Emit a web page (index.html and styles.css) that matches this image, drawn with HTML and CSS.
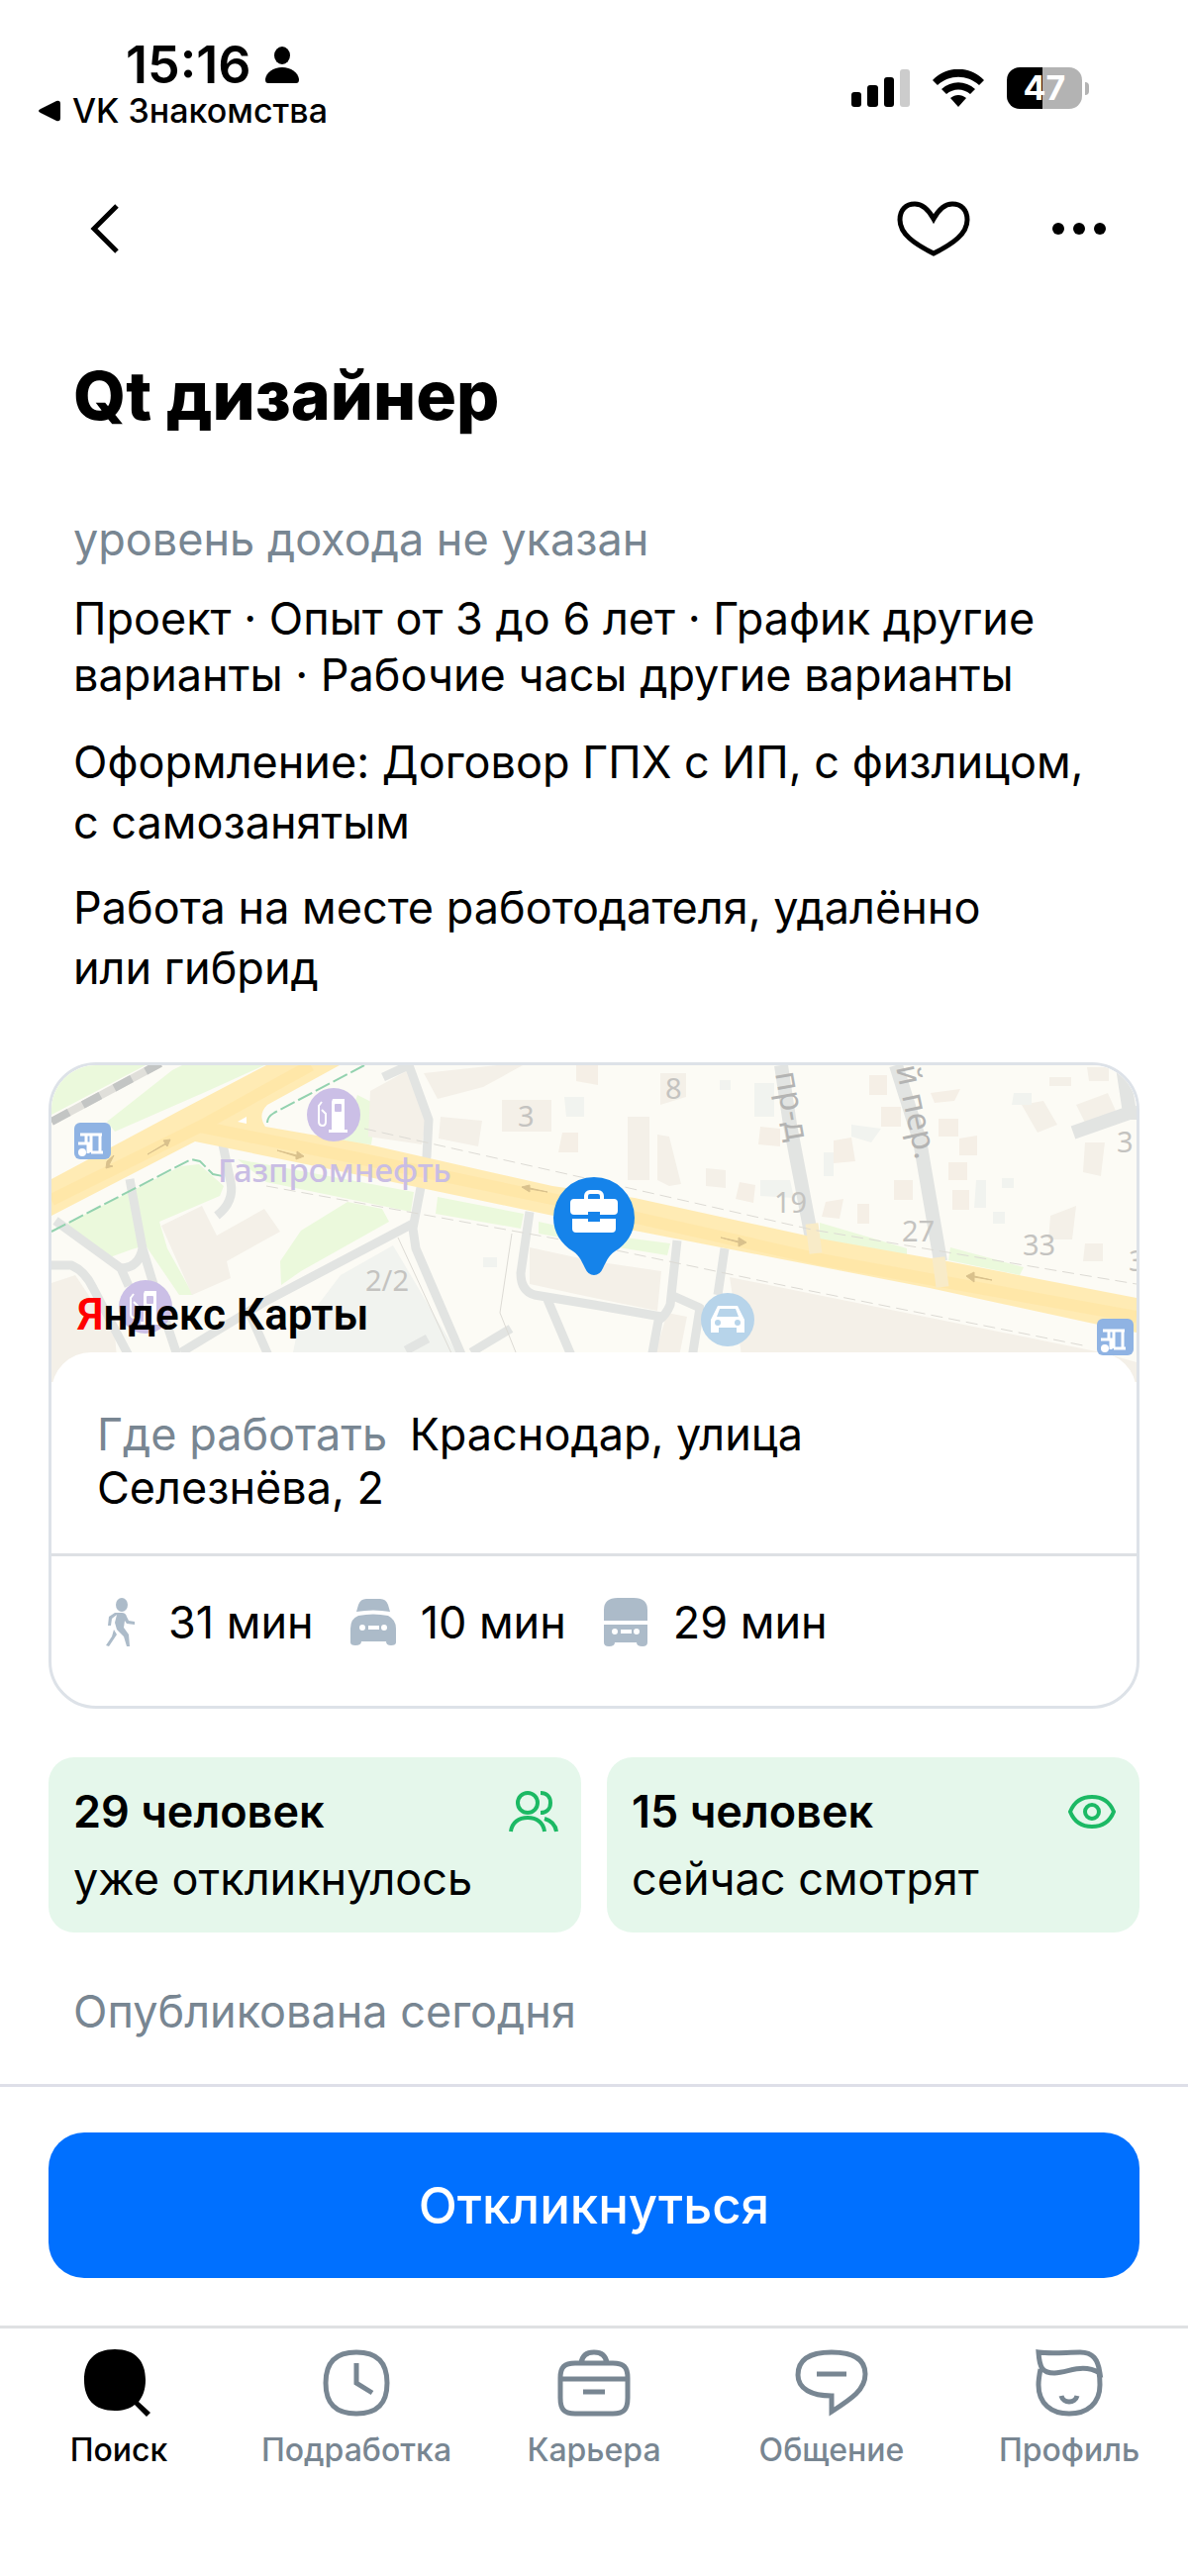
FILE: index.html
```html
<!DOCTYPE html>
<html lang="ru">
<head>
    <meta charset="UTF-8">
    <meta name="viewport" content="width=device-width, initial-scale=1.0">
    <title>Qt дизайнер</title>
    <link rel="stylesheet" href="styles.css">
</head>
<body>

    <!-- Status bar -->
    <div class="status">
        <div class="status-left">
            <div class="clock">
                <span>15:16</span>
                <svg width="34" height="38" viewBox="0 0 34 38"><ellipse cx="17" cy="9" rx="8" ry="9"/><path d="M0 33C1 26 8 21 17 21s16 5 17 12c0 3-1 4-3 4H3c-2 0-3-1-3-4z"/></svg>
            </div>
            <a class="return" href="#">
                <svg width="22" height="22" viewBox="0 0 22 22"><path d="M2 9L18 1q4-1 4 3v14q0 4-4 3L2 13q-4-2 0-4z"/></svg>
                VK Знакомства
            </a>
        </div>
        <div class="status-right">
            <svg width="59" height="38" viewBox="0 0 59 38">
                <rect y="23" width="10" height="15" rx="3"/>
                <rect x="16" y="16" width="11" height="22" rx="3"/>
                <rect x="33" y="8" width="10" height="30" rx="3"/>
                <rect x="49" width="10" height="38" rx="3" fill="#ccc"/>
            </svg>
            <svg width="52" height="38" viewBox="0 0 52 38">
                <path d="M0 11C14-4 38-4 52 11l-5 5C35 5 17 5 5 16z"/>
                <path d="M9 20c10-9 24-9 34 0l-5 5c-7-6-17-6-24 0z"/>
                <path d="M18 29c5-4 11-4 16 0l-8 9z"/>
            </svg>
            <div class="battery"><span>47</span></div>
        </div>
    </div>

    <!-- App bar -->
    <header class="appbar">
        <button class="icon-btn" aria-label="Назад">
            <svg width="30" height="50" viewBox="0 0 30 50" fill="none" stroke="#000" stroke-width="5"><path d="M28 2L5 25l23 23"/></svg>
        </button>
        <div class="appbar-actions">
            <button class="icon-btn" aria-label="В избранное">
                <svg width="74" height="56" viewBox="0 0 74 56" fill="none" stroke="#000" stroke-width="5"><path d="M37 18C32 9 26 3 18 3 9 3 3 9 3 19c0 14 14 24 34 34 20-10 34-20 34-34C71 9 65 3 56 3c-8 0-14 6-19 15z"/></svg>
            </button>
            <button class="icon-btn" aria-label="Ещё">
                <svg width="56" height="14" viewBox="0 0 56 14"><circle cx="7" cy="7" r="6"/><circle cx="28" cy="7" r="6"/><circle cx="49" cy="7" r="6"/></svg>
            </button>
        </div>
    </header>

    <main>
        <!-- Vacancy description -->
        <section class="vacancy">
            <h1>Qt дизайнер</h1>
            <p class="income">уровень дохода не указан</p>
            <p class="terms">Проект · Опыт от 3 до 6 лет · График другие<br>варианты · Рабочие часы другие варианты</p>
            <p>Оформление: Договор ГПХ с ИП, с физлицом,<br>с самозанятым</p>
            <p>Работа на месте работодателя, удалённо<br>или гибрид</p>
        </section>

        <!-- Address card -->
        <section class="place">
            <div class="map">
                <svg class="map-tiles" viewBox="0 0 1096 320" preserveAspectRatio="xMidYMin slice">
                    <rect width="1096" height="320" fill="#fcfbf5"/>
                    <!-- greenery -->
                    <g fill="#ebf9dc">
                        <path d="M0 0h95L0 50z"/>
                        <path d="M56 57L122 5l10-5h83l-55 25-96 42z"/>
                        <path d="M15 160l116-58 18-2 25 22-4 10-61 26 8 27 26 47h-14L95 182l-14 4-22 8z"/>
                        <path d="M231 198l21-31 47-29 35 7 7 13-89 50-20 14z"/>
                        <path d="M188 95l178 33-3 20-146-30zM390 133l87 17-3 15-86-15zM492 158l56 12 77 10-3 12-74-12-56-10z"/>
                        <path d="M776 159l88 26 0 11-88-20zM908 184l74 20-4 8-72-15z"/>
                    </g>
                    <path d="M309 30l20 10-6 40-30-2z" fill="#ebf9dc"/>
                    <!-- buildings -->
                    <g fill="#f4f0e8">
                        <path d="M111 162l41-20 15 30 48-27 16 23-54 30 4 17-39 17z"/>
                        <path d="M0 220l24-8 40 60 4 48H0z"/>
                        <path d="M322 26l40-22 18 44-6 32-54-8z"/>
                        <path d="M376 8l74-8h26l-40 22-46 12zM393 52l42 4-4 26-40-8zM455 35h50v32h-50z"/>
                        <path d="M483 184l65 14 68 10-4 40-64-13-65-14z"/>
                        <path d="M685 214l375 76 36 10v20H700l-4-34z"/>
                        <path d="M582 52h22v64h-22zM612 70l12 2 12 48-12 2-12-6zM615 8h26v24l-26 8zM661 104l20 2v18l-20-2z"/>
                        <path d="M622 250l20 4-8 40-24-4zM980 40l22-4 14 24-20 8zM1035 40l32-12 8 18-30 14zM1044 78h20l-4 34-18-4z"/>
                        <path d="M1009 152l26-10-4 34-24 0zM1044 180h18v18h-20zM1008 12h22v9h-22zM1046 2h22l0 14h-20z"/>
                    </g>
                    <g fill="#f5efe6">
                        <path d="M826 10h18v20h-18zM838 42h20v20h-20zM790 76l18-3 4 24-22 2zM716 62l20 2v18l-22-2zM851 116h19v20h-19zM896 54h20v18h-20zM917 74l18-3v20h-18zM906 98h19v18h-19zM910 126h17v20h-17zM695 118l16 3-2 18-18-4zM782 138l18-3-4 20-18-2zM814 140h12v20h-12zM888 28l30-4-6 12-20 2zM530 0h22v20l-22-4zM516 68h16v20h-20z"/>
                    </g>
                    <g fill="#f1f3ef">
                        <path d="M292 212l53-30 64 108v30H238l10-50z"/>
                        <path d="M716 116h30l4 18-34-2zM808 60l30 4-10 14-20-6zM934 116h10v28h-12zM972 28h18v12h-20zM960 114h12v10h-12zM780 88h10v24h-10zM710 18h20v34h-20zM518 32h20v20h-18zM675 15h11v10h-11z"/>
                        <path d="M951 148h12v12h-12zM436 194h14v10h-14z"/>
                    </g>
                    <!-- side streets -->
                    <g fill="none" stroke="#e2e4e2" stroke-width="9" stroke-linejoin="round">
                        <path d="M335 12l26-12 20 55-2 37-14 73 3 20 58 135"/>
                        <path d="M365 160L217 238l-86 52"/>
                        <path d="M79 115l13 70q-4 20-22 20L4 157M92 185l10 33 30 90M70 205l8 18"/>
                        <path d="M0 202h20q14 6 22 23l50 95"/>
                        <path d="M173 80l8 38q4 20-14 34"/>
                        <path d="M483 148l-9 62q0 18 14 22l60 10 68 12M499 232l34 80"/>
                        <path d="M632 177l-7 65q-4 10-12 16l-10 54M680 185l-7 47M628 233l27 12-11 70M358 288l22-12M424 290l40-24M200 250l22 50"/>
                        <path d="M737 0l9 60 22 115M853 0l24 76 21 122" stroke-width="14"/>
                        <path d="M1082 2l7 46-57 20M1088 48h8" stroke-width="14"/>
                    </g>
                    <path d="M0 57L110-2" stroke="#e0dfda" stroke-width="8"/>
                    <path d="M0 57L110-2" stroke="#c3c5c4" stroke-width="8" stroke-dasharray="20 16"/>
                    <!-- main road -->
                    <path d="M0 115l131-70L217 0h74l-73 40q-10 10-2 22l104 18 186 42 83 12 187 41 129 23 191 37v35l-48-10-161-35-298-58-87-16-157-33-200-41L0 152z" fill="#ffebb4"/>
                    <path d="M0 136L150 62 262 0M150 62l170 34 200 42 256 58 320 58" fill="none" stroke="#ffe4a0" stroke-width="12" opacity=".6"/>
                    <path d="M188 57l9-5v7z" fill="#fff"/>
                    <path d="M768 160l4 30M896 194l4 30" stroke="#f8ebc8" stroke-width="13"/>
                    <g fill="none" stroke="#dcdad4" stroke-width="1">
                        <path d="M316 64l232 52 220 50 328 55M217 122l330 60 200 42 300 60" stroke-dasharray="12 6"/>
                        <path d="M350 174l60 130M465 170l-12 80 24 60"/>
                    </g>
                    <g fill="none" stroke="#93d2af" stroke-width="2" stroke-dasharray="16 4">
                        <path d="M0 168l141-73 9 2 13 13 10 2"/>
                        <path d="M218 58q0-6 7-10L316 0"/>
                    </g>
                    <!-- traffic arrows -->
                    <g fill="#d9c18c" stroke="#d9c18c" stroke-width="1">
                        <path d="M97 90l18-11-2-3 7-1-3 7-2-2zM228 86l20 5v-4l7 5-8 3v-3zM501 128l-18-4 0-3-8 2 8 5v-3zM63 91l-5 10 4 1-7 2 1-7z"/>
                        <path d="M676 174l18 4v-4l8 5-8 4v-4zM950 217l-18-4 0-4-8 4 8 6v-5z"/>
                    </g>
                    <!-- labels -->
                    <g class="map-text">
                        <text x="168" y="118" class="poi">Газпромнефть</text>
                        <text x="471" y="62">3</text>
                        <text x="620" y="34">8</text>
                        <text x="730" y="149">19</text>
                        <text x="859" y="178">27</text>
                        <text x="981" y="192">33</text>
                        <text x="1076" y="88">3</text>
                        <text x="1088" y="208">3</text>
                        <text x="317" y="228">2/2</text>
                        <text class="street" transform="translate(731 8) rotate(80)">пр-д</text>
                        <text class="street" transform="translate(853 2) rotate(78)">й пер.</text>
                    </g>
                    <!-- petrol stations -->
                    <g id="petrol">
                        <circle cx="285" cy="50" r="27" fill="#cbbfe6"/>
                        <path d="M284 34h12v31h3v3h-19v-3h3V37z" fill="#fff"/>
                        <path d="M273 37l-3 4v16q0 4 4 4 3 0 3-4v-8l-4-4" fill="none" stroke="#fff" stroke-width="2"/>
                        <rect x="286" y="39" width="7" height="8" rx="1" fill="#cbbfe6"/>
                    </g>
                    <use href="#petrol" x="-190" y="194"/>
                    <!-- parking -->
                    <circle cx="683" cy="257" r="27" fill="#b7d4ea"/>
                    <path d="M673 243h20l5 10 2 4v13h-8v-5h-18v5h-8v-13l2-4z" fill="#fff"/>
                    <path d="M675 246h16l3 8h-22z" fill="#b7d4ea"/>
                    <circle cx="673" cy="260" r="3" fill="#b7d4ea"/><circle cx="693" cy="260" r="3" fill="#b7d4ea"/>
                    <use href="#stop" x="23" y="58"/>
                </svg>
                <svg class="pin" width="82" height="100" viewBox="0 0 82 100">
                    <path d="M41 0a41 41 0 0 1 41 41c0 15-8 27-20 34-6 4-8 9-12 17q-3 7-9 7t-9-7c-4-8-6-13-12-17C8 68 0 56 0 41A41 41 0 0 1 41 0z" fill="#1583ea"/>
                    <rect x="33" y="15" width="16" height="14" rx="4" fill="none" stroke="#fff" stroke-width="4"/>
                    <path d="M21 22h40q4 0 4 4v8q0 4-4 4H47v-3H35v3H21q-4 0-4-4v-8q0-4 4-4z" fill="#fff"/>
                    <path d="M19 42h16v3h12v-3h16v10q0 4-4 4H23q-4 0-4-4z" fill="#fff"/>
                </svg>
                <span class="map-logo"><b>Я</b>ндекс Карты</span>
                <svg class="map-stop" width="37" height="37" viewBox="0 0 37 37">
                    <g id="stop">
                        <rect width="37" height="37" rx="6" fill="#8fb3e3"/>
                        <path d="M6 12h22M17 12v18M26 12v18M17 30h12M4 21h10v10M12 12v9" fill="none" stroke="#fff" stroke-width="3"/>
                        <circle cx="8" cy="30" r="4" fill="#fff"/>
                    </g>
                </svg>
            </div>
            <div class="address">
                <p><span class="muted">Где работать</span>&ensp;Краснодар, улица<br>Селезнёва, 2</p>
            </div>
            <ul class="routes">
                <li>
                    <svg width="48" height="50" viewBox="0 0 48 50" fill="#acbbc9">
                        <ellipse cx="25" cy="7" rx="6" ry="7"/>
                        <path d="M18 15h7q4 0 5 4l2 4 6 1v3l-8-1-2-3-1 7 5 7 1 12h-3l-3-10-7-7-2-7 2-8-5 4-1 7h-3l1-9z"/>
                        <path d="M17 32l3 5-8 12-3-1 6-9z"/>
                    </svg>
                    <span>31 мин</span>
                </li>
                <li>
                    <svg width="48" height="50" viewBox="0 0 48 50" fill="#acbbc9">
                        <path d="M7 14l2-7q2-6 8-6h14q6 0 8 6l2 7q-17-3-34 0z"/>
                        <path fill-rule="evenodd" d="M9 18q15-3 30 0 8 4 8 13v14q0 3-5 3t-5-4H12q0 4-6 4-5 0-5-3V31Q1 21 9 18zM13 27a3 3 0 1 0 0 6 3 3 0 1 0 0-6zM35 27a3 3 0 1 0 0 6 3 3 0 1 0 0-6zM19 28v4h11v-4z"/>
                    </svg>
                    <span>10 мин</span>
                </li>
                <li>
                    <svg width="48" height="50" viewBox="0 0 48 50" fill="#acbbc9">
                        <path d="M2 23V12Q2 0 16 0h16q14 0 14 12v11z"/>
                        <path fill-rule="evenodd" d="M2 27h44v18q0 4-5 4-6 0-6-4H13q0 4-6 4-5 0-5-4zM13 31a3 3 0 1 0 0 6 3 3 0 1 0 0-6zM35 31a3 3 0 1 0 0 6 3 3 0 1 0 0-6zM19 32v4h11v-4z"/>
                    </svg>
                    <span>29 мин</span>
                </li>
            </ul>
        </section>

        <!-- Activity -->
        <section class="stats">
            <div class="stat">
                <div>
                    <strong>29 человек</strong>
                    <span>уже откликнулось</span>
                </div>
                <svg width="50" height="42" viewBox="0 0 50 42" fill="none" stroke="#1cb964" stroke-width="4">
                    <circle cx="19" cy="12" r="10"/>
                    <path d="M2 41c1-9 8-14 17-14s16 5 17 14M32 2c6 0 10 4 10 10s-4 10-10 10M36 28c7 2 11 6 12 13"/>
                </svg>
            </div>
            <div class="stat">
                <div>
                    <strong>15 человек</strong>
                    <span>сейчас смотрят</span>
                </div>
                <svg width="50" height="42" viewBox="0 0 50 42" fill="none" stroke="#1cb964" stroke-width="4">
                    <path d="M3 21C7 11 15 6 25 6s18 5 22 15c-4 10-12 15-22 15S7 31 3 21z"/>
                    <circle cx="25" cy="21" r="7"/>
                </svg>
            </div>
        </section>

        <p class="published">Опубликована сегодня</p>
    </main>

    <div class="apply">
        <button class="apply-btn">Откликнуться</button>
    </div>

    <!-- Tab bar -->
    <nav class="tabs">
        <a class="tab active" href="#">
            <svg width="74" height="68" viewBox="0 0 74 68"><path d="M33 0c21 0 31 12 31 31 0 10-3 17-7 22l12 11-4 4-12-12c-5 4-12 6-20 6C12 62 2 50 2 31S12 0 33 0z"/></svg>
            Поиск
        </a>
        <a class="tab" href="#">
            <svg width="74" height="68" viewBox="0 0 74 68"><path d="M37 3c21 0 31 10 31 31S58 65 37 65 6 55 6 34 16 3 37 3zM37 14v20l16 10"/></svg>
            Подработка
        </a>
        <a class="tab" href="#">
            <svg width="74" height="68" viewBox="0 0 74 68"><path d="M18 14h38c11 0 15 4 15 15v20c0 12-4 16-15 16H18C7 65 3 61 3 49V29c0-11 4-15 15-15zM3 30h68M26 43h22M24 14c1-8 6-11 13-11s12 3 13 11"/></svg>
            Карьера
        </a>
        <a class="tab" href="#">
            <svg width="74" height="68" viewBox="0 0 74 68"><path d="M37 3c22 0 34 7 34 22 0 16-14 25-34 38V47C17 47 3 40 3 26 3 10 16 3 37 3zM22 25h30"/></svg>
            Общение
        </a>
        <a class="tab" href="#">
            <svg width="74" height="68" viewBox="0 0 74 68"><path d="M6 3c14 2 28 0 42 0 13 0 18 7 20 21-18-10-30-1-46 0C10 24 7 19 6 3zM8 20c-1 5-2 10-2 16 0 19 13 29 31 29s31-10 31-29c0-5 0-8-1-13M29 47c2 8 14 8 16 0"/></svg>
            Профиль
        </a>
    </nav>

</body>
</html>
```
FILE: styles.css
```css
* {
    box-sizing: border-box;
}
body {
    margin: 0;
    background: #fff;
    color: #000;
    font-family: Inter, "Liberation Sans", sans-serif;
    font-size: 45px;
}
h1, p, ul {
    margin: 0;
    padding: 0;
}
a {
    color: inherit;
    text-decoration: none;
}
button {
    border: 0;
    padding: 0;
    background: none;
    font-family: inherit;
    cursor: pointer;
}
svg {
    display: block;
    flex: none;
}

/* status bar */
.status {
    display: flex;
    justify-content: space-between;
    padding: 41px 100px 0 39px;
}
.clock {
    display: flex;
    align-items: center;
    gap: 14px;
    padding-left: 88px;
    font-size: 52px;
    font-weight: 600;
    line-height: 50px;
}
.return {
    display: flex;
    align-items: center;
    gap: 12px;
    font-size: 34px;
    font-weight: 500;
    line-height: 42px;
}
.status-right {
    display: flex;
    align-items: center;
    gap: 23px;
    height: 96px;
}
.battery {
    position: relative;
    width: 76px;
    height: 42px;
    margin-right: 7px;
    border-radius: 13px;
    background: linear-gradient(to right, #000 47%, #b3b3b3 47%);
    color: #fff;
    font-size: 34px;
    font-weight: 700;
    line-height: 42px;
    text-align: center;
}
.battery::after {
    content: "";
    position: absolute;
    right: -7px;
    top: 15px;
    width: 4px;
    height: 13px;
    border-radius: 0 4px 4px 0;
    background: #b3b3b3;
}

/* app bar */
.appbar {
    display: flex;
    justify-content: space-between;
    padding: 46px 82px 0 90px;
}
.appbar-actions {
    display: flex;
    gap: 82px;
}
.icon-btn {
    display: flex;
    align-items: center;
    height: 96px;
}

/* vacancy */
main {
    padding: 78px 49px 43px;
}
.vacancy {
    padding: 0 25px;
}
.vacancy p {
    margin-top: 25px;
    line-height: 61px;
}
h1 {
    font-size: 68px;
    font-weight: 800;
    line-height: 84px;
}
.vacancy .income {
    margin-top: 73px;
    color: #788692;
}
.vacancy .terms {
    margin: 21px 0 29px;
    line-height: 57px;
}
.muted, .published {
    color: #788692;
}

/* address card */
.place {
    margin-top: 65px;
    border: 3px solid #dde2e8;
    border-radius: 48px;
    overflow: hidden;
}
.map {
    position: relative;
    height: 320px;
}
.map-tiles {
    width: 100%;
    height: 100%;
}
.map-text {
    font-family: "Noto Sans", sans-serif;
    font-size: 29px;
    fill: #c4c3c0;
}
.map-text .poi {
    font-size: 33px;
    font-weight: 500;
    fill: #c9bde4;
}
.map-text .street {
    font-size: 33px;
    fill: #b4b4b3;
}
.pin {
    position: absolute;
    left: 50%;
    top: 113px;
    margin-left: -41px;
}
.map-logo {
    position: absolute;
    left: 26px;
    bottom: 40px;
    font-family: Roboto, sans-serif;
    font-size: 44px;
    font-weight: 600;
    line-height: 56px;
}
.map-logo b {
    color: #f00;
    font-weight: inherit;
}
.map-stop {
    position: absolute;
    right: 3px;
    bottom: 27px;
    z-index: 2;
}
.address {
    position: relative;
    margin-top: -30px;
    padding: 56px 46px 39px;
    border-bottom: 3px solid #dde0e4;
    border-radius: 40px 40px 0 0;
    background: #fff;
    line-height: 54px;
}
.routes {
    display: flex;
    gap: 36px;
    padding: 40px 46px 57px;
    line-height: 54px;
    list-style: none;
}
.routes li {
    display: flex;
    align-items: center;
    gap: 24px;
}

/* activity */
.stats {
    display: grid;
    grid-template-columns: 1fr 1fr;
    gap: 26px;
    margin-top: 49px;
}
.stat {
    display: flex;
    justify-content: space-between;
    padding: 21px 23px 20px 25px;
    border-radius: 26px;
    background: #e5f7eb;
    line-height: 68px;
}
.stat strong, .stat span {
    display: block;
}
.stat strong {
    font-weight: 600;
}
.stat svg {
    margin-top: 13px;
}
.published {
    margin-top: 50px;
    padding: 0 25px;
    line-height: 60px;
}

/* apply button */
.apply {
    padding: 46px 49px 48px;
    border-top: 3px solid #dedfe8;
}
.apply-btn {
    width: 100%;
    height: 147px;
    border-radius: 36px;
    background: #0070ff;
    color: #fff;
    font-size: 51px;
    font-weight: 500;
}

/* tab bar */
.tabs {
    display: grid;
    grid-template-columns: repeat(5, 1fr);
    padding: 21px 0 108px;
    border-top: 3px solid #dfe1e3;
}
.tab {
    display: flex;
    flex-direction: column;
    align-items: center;
    gap: 14px;
    color: #788692;
    font-size: 32px;
    font-weight: 500;
    line-height: 40px;
}
.tab svg {
    fill: none;
    stroke: #788692;
    stroke-width: 5;
}
.tab.active {
    color: #000;
}
.tab.active svg {
    fill: #000;
    stroke: none;
}
```
